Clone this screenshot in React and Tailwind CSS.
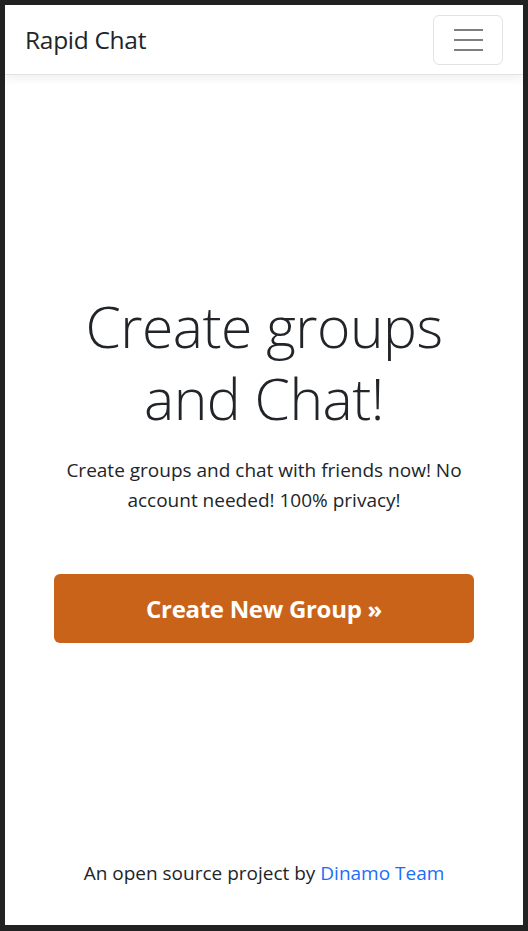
export default function App() {
  return (
    <div className="h-[931px] w-full bg-[#222222] pt-[5px] px-[5px] pb-[6px]" style={{ fontFamily: '"Open Sans", "Noto Sans", sans-serif' }}>
      <div className="h-full bg-white flex flex-col text-[#212529]">
        {/* Navbar */}
        <nav className="h-[70px] flex-shrink-0 flex items-center justify-between pl-[20px] pr-[20px] border-b border-[#e3e3e3] shadow-[0_3px_10px_rgba(0,0,0,0.07)] relative z-10">
          <span className="text-[24.5px] leading-none tracking-[-0.3px] mt-[2px]">Rapid Chat</span>
          <button
            className="w-[70px] h-[50px] rounded-[6px] border border-[#e2e2e2] flex flex-col items-center justify-center gap-[8px]"
            aria-label="Toggle navigation"
          >
            <span className="block w-[29px] h-[2px] bg-[#7f7f7f]" />
            <span className="block w-[29px] h-[2px] bg-[#7f7f7f]" />
            <span className="block w-[29px] h-[2px] bg-[#7f7f7f]" />
          </button>
        </nav>

        {/* Hero */}
        <main className="flex-1 flex flex-col items-center px-[49px] pt-[215px] text-center">
          <h1 className="text-[57px] leading-[72px] font-light tracking-[-0.5px]">
            Create groups
            <br />
            and Chat!
          </h1>
          <p className="mt-[21px] text-[19px] leading-[30px]">
            Create groups and chat with friends now! No account needed! 100% privacy!
          </p>
          <button className="mt-[59px] w-full h-[69px] rounded-[6px] bg-[#ca631a] text-white text-[24px] font-bold tracking-[-0.3px]">
            Create New Group »
          </button>
        </main>

        {/* Footer */}
        <footer className="pb-[37px] text-center text-[19px] leading-[30px]">
          An open source project by <a href="#" className="text-[#1a6dfb]">Dinamo Team</a>
        </footer>
      </div>
    </div>
  );
}
